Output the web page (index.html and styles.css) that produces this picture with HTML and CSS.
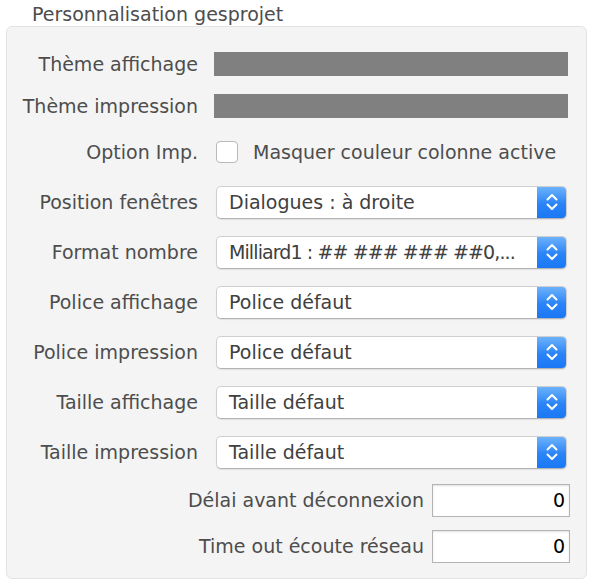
FILE: index.html
```html
<!DOCTYPE html>
<html lang="fr">
<head>
<meta charset="utf-8">
<link rel="stylesheet" href="styles.css">
</head>
<body>
<div class="title">Personnalisation gesprojet</div>
<div class="panel">
  <div class="row row-bar"><span class="label">Thème affichage</span><span class="bar"></span></div>
  <div class="row row-bar"><span class="label">Thème impression</span><span class="bar"></span></div>
  <div class="row"><span class="label">Option Imp.</span><span class="check"></span><span class="check-text">Masquer couleur colonne active</span></div>
  <div class="row"><span class="label">Position fenêtres</span><div class="select"><span class="select-text">Dialogues : à droite</span><span class="stepper"><svg width="12" height="20" viewBox="0 0 12 20"><path d="M1.5 7.5 L6 3 L10.5 7.5 M1.5 12.5 L6 17 L10.5 12.5" fill="none" stroke="#fff" stroke-width="2" stroke-linecap="round" stroke-linejoin="round"/></svg></span></div></div>
  <div class="row"><span class="label">Format nombre</span><div class="select"><span class="select-text tight">Milliard1 : ## ### ### ##0,...</span><span class="stepper"><svg width="12" height="20" viewBox="0 0 12 20"><path d="M1.5 7.5 L6 3 L10.5 7.5 M1.5 12.5 L6 17 L10.5 12.5" fill="none" stroke="#fff" stroke-width="2" stroke-linecap="round" stroke-linejoin="round"/></svg></span></div></div>
  <div class="row"><span class="label">Police affichage</span><div class="select"><span class="select-text">Police défaut</span><span class="stepper"><svg width="12" height="20" viewBox="0 0 12 20"><path d="M1.5 7.5 L6 3 L10.5 7.5 M1.5 12.5 L6 17 L10.5 12.5" fill="none" stroke="#fff" stroke-width="2" stroke-linecap="round" stroke-linejoin="round"/></svg></span></div></div>
  <div class="row"><span class="label">Police impression</span><div class="select"><span class="select-text">Police défaut</span><span class="stepper"><svg width="12" height="20" viewBox="0 0 12 20"><path d="M1.5 7.5 L6 3 L10.5 7.5 M1.5 12.5 L6 17 L10.5 12.5" fill="none" stroke="#fff" stroke-width="2" stroke-linecap="round" stroke-linejoin="round"/></svg></span></div></div>
  <div class="row"><span class="label">Taille affichage</span><div class="select"><span class="select-text">Taille défaut</span><span class="stepper"><svg width="12" height="20" viewBox="0 0 12 20"><path d="M1.5 7.5 L6 3 L10.5 7.5 M1.5 12.5 L6 17 L10.5 12.5" fill="none" stroke="#fff" stroke-width="2" stroke-linecap="round" stroke-linejoin="round"/></svg></span></div></div>
  <div class="row"><span class="label">Taille impression</span><div class="select"><span class="select-text">Taille défaut</span><span class="stepper"><svg width="12" height="20" viewBox="0 0 12 20"><path d="M1.5 7.5 L6 3 L10.5 7.5 M1.5 12.5 L6 17 L10.5 12.5" fill="none" stroke="#fff" stroke-width="2" stroke-linecap="round" stroke-linejoin="round"/></svg></span></div></div>
  <div class="row row-input"><span class="label-wide">Délai avant déconnexion</span><span class="input">0</span></div>
  <div class="row row-input"><span class="label-wide">Time out écoute réseau</span><span class="input">0</span></div>
</div>
</body>
</html>
```
FILE: styles.css
```css
html, body {
  margin: 0;
  padding: 0;
  background: #ffffff;
}
body {
  width: 596px;
  height: 586px;
  font-family: "DejaVu Sans", "Liberation Sans", sans-serif;
  font-size: 19px;
  color: #4d4d4d;
}
.title {
  height: 26px;
  line-height: 28px;
  padding-left: 32px;
  font-size: 19px;
  color: #4d4d4d;
}
.panel {
  margin-left: 6px;
  width: 579px;
  height: 535px;
  padding-top: 16px;
  background: #f4f4f4;
  border: 1px solid #e3e3e3;
  border-radius: 6px;
  box-sizing: content-box;
}
.row {
  display: flex;
  align-items: center;
  height: 50px;
}
.row-bar { height: 42px; }
.row-input { height: 46px; }
.label {
  width: 191px;
  flex: none;
  text-align: right;
  white-space: nowrap;
}
.label-wide {
  width: 417px;
  flex: none;
  text-align: right;
  white-space: nowrap;
}
.bar {
  margin-left: 16px;
  width: 354px;
  height: 24px;
  background: #808080;
}
.check {
  margin-left: 18px;
  width: 22px;
  height: 22px;
  box-sizing: border-box;
  background: #fff;
  border: 1px solid #b9b9b9;
  border-radius: 4px;
  flex: none;
}
.check-text {
  margin-left: 15px;
  white-space: nowrap;
}
.select {
  margin-left: 18px;
  width: 351px;
  height: 33px;
  box-sizing: border-box;
  display: flex;
  align-items: stretch;
  background: #fff;
  border: 1px solid #cfcfcf;
  border-bottom-color: #b3b3b3;
  border-radius: 5px;
  box-shadow: 0 1px 1px rgba(0,0,0,0.08);
  overflow: hidden;
}
.select-text {
  flex: 1;
  padding-left: 12px;
  line-height: 31px;
  color: #404040;
  white-space: nowrap;
  overflow: hidden;
}
.select-text.tight {
  letter-spacing: -0.9px;
}
.stepper {
  width: 29px;
  flex: none;
  display: flex;
  align-items: center;
  justify-content: center;
  background: linear-gradient(#6cb2fb, #2a84f7 55%, #1a78f5);
}
.input {
  margin-left: 8px;
  width: 138px;
  height: 33px;
  box-sizing: border-box;
  background: #fff;
  border: 1px solid #b4b4b4;
  box-shadow: inset 0 1px 2px rgba(0,0,0,0.12);
  text-align: right;
  padding-right: 4px;
  line-height: 31px;
  color: #000;
}
```
